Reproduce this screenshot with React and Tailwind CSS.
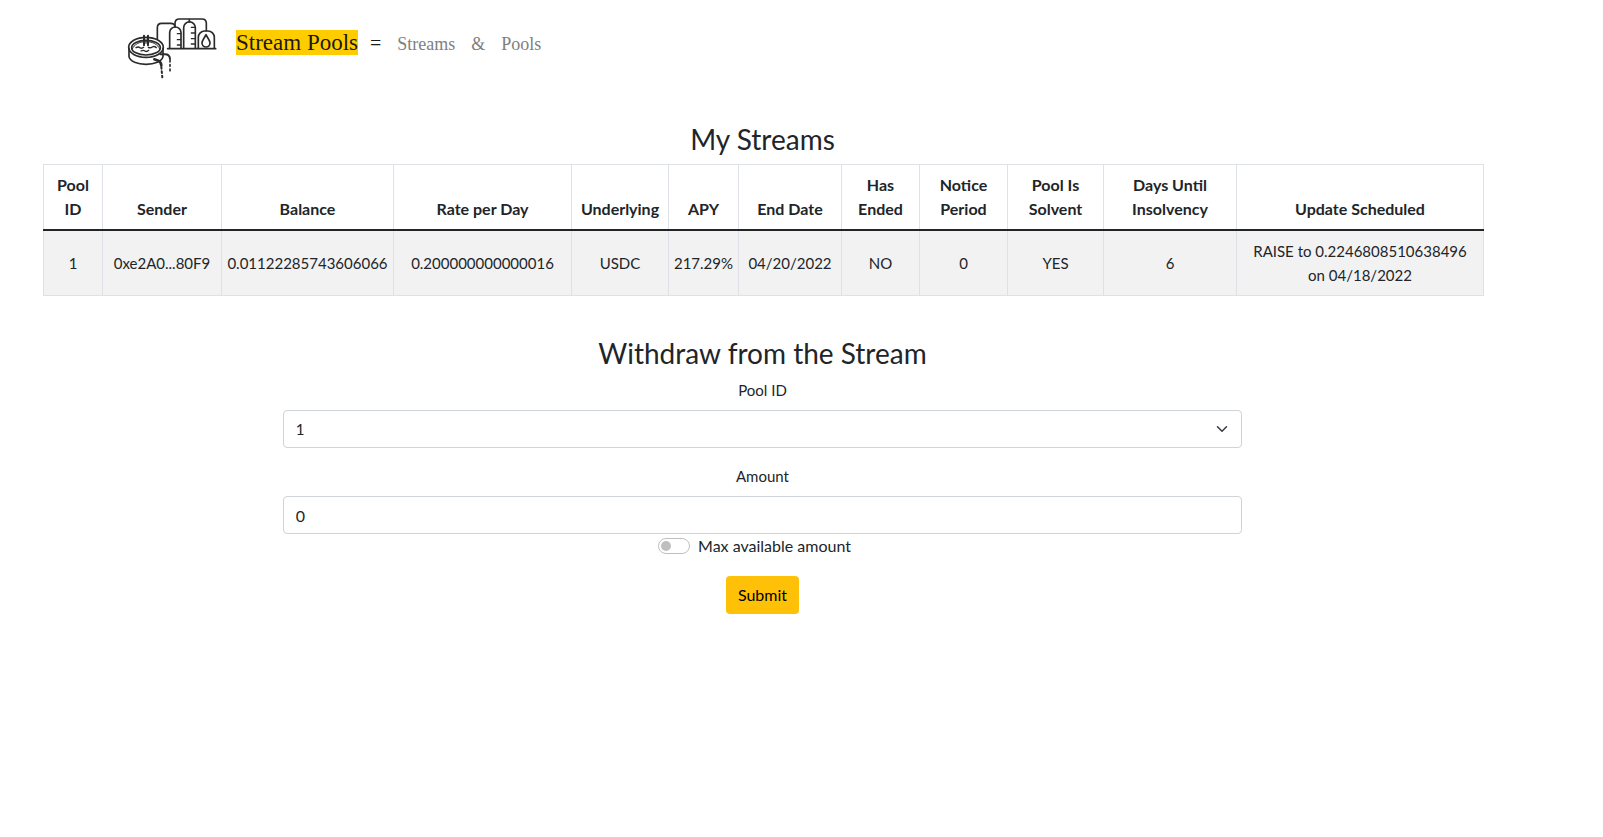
import { useState } from 'react'

const columns = [
  { label: ['Pool', 'ID'], width: 'w-[59px]', value: ['1'] },
  { label: ['Sender'], width: 'w-[119px]', value: ['0xe2A0...80F9'] },
  { label: ['Balance'], width: 'w-[172px]', value: ['0.01122285743606066'] },
  { label: ['Rate per Day'], width: 'w-[178px]', value: ['0.200000000000016'] },
  { label: ['Underlying'], width: 'w-[97px]', value: ['USDC'] },
  { label: ['APY'], width: 'w-[70px]', value: ['217.29%'] },
  { label: ['End Date'], width: 'w-[103px]', value: ['04/20/2022'] },
  { label: ['Has', 'Ended'], width: 'w-[78px]', value: ['NO'] },
  { label: ['Notice', 'Period'], width: 'w-[88px]', value: ['0'] },
  { label: ['Pool Is', 'Solvent'], width: 'w-[96px]', value: ['YES'] },
  { label: ['Days Until', 'Insolvency'], width: 'w-[133px]', value: ['6'] },
  {
    label: ['Update Scheduled'],
    width: 'w-[247px]',
    value: ['RAISE to 0.2246808510638496', 'on 04/18/2022'],
  },
]

function Lines({ items }) {
  return items.map((line) => (
    <span key={line} className="block">
      {line}
    </span>
  ))
}

function Logo() {
  return (
    <svg
      viewBox="0 0 345 255"
      className="h-[85px] w-[115px] shrink-0"
      fill="none"
      stroke="#2b2b2b"
      strokeWidth="5"
      strokeLinecap="round"
      strokeLinejoin="round"
      aria-hidden="true"
    >
      {/* tanks */}
      <path d="M158 131H302" />
      <path d="M164 130V83a17 17 0 0 1 34 0V130" />
      <path d="M206 130V68a17.500 17.500 0 0 1 35 0V130" />
      <path d="M250 130V97a19 19 0 0 1 19-19h10a19 19 0 0 1 19 19V130" />
      <path d="M187 86h10M187 104h10M187 120h10M229 67h11M229 84h11M229 101h11M229 117h11" strokeWidth="4" />
      <path d="M273 89c-5 11-12 17-12 25a12 12 0 0 0 24 0c0-8-7-14-12-25Z" />
      {/* pipes */}
      <path d="M127 102V68q0-13 13-13h27q13 0 13 11" />
      <path d="M180 65V55q0-13 13-13h68q13 0 13 13V77M223 42V50" />
      {/* pool */}
      <ellipse cx="93" cy="127" rx="52" ry="30" />
      <ellipse cx="93" cy="128" rx="43" ry="22" />
      <path d="M42 130V155c3 14 25 23 51 23s48-9 51-23V130" />
      <path d="M52 132c5-14 21-22 41-22s36 8 41 22" strokeWidth="3" />
      {/* ladder */}
      <path d="M87 92V121M99 92V121" strokeWidth="6" />
      <path d="M87 98h12M87 106h12M87 114h12" strokeWidth="3" />
      {/* water */}
      <path d="M63 128q7-4 12 0t11-1M100 127q6 3 12-1t12 2M78 138q7-4 12 0t11-2" strokeWidth="4" />
      {/* outlets */}
      <path d="M136 148h14q14 0 15 14" strokeWidth="6" />
      <path d="M165 166V200" strokeWidth="5" strokeDasharray="5 8" />
      <path d="M118 163l12 4q8 4 9 14" strokeWidth="8" />
      <path d="M139 186l3 32" strokeWidth="6" strokeDasharray="5 8" />
    </svg>
  )
}

export default function App() {
  const [poolId, setPoolId] = useState('1')
  const [amount, setAmount] = useState('0')
  const [useMax, setUseMax] = useState(false)

  return (
    <div className="bg-white font-['Lato',sans-serif] text-base text-[#212529]">
      <header className="flex items-center gap-1.5 pt-[5px] pl-[115px]">
        <Logo />
        <nav className="flex items-baseline pb-2.5 font-['Liberation_Serif',serif] text-lg leading-6 text-[#7f7f7f]">
          <a href="#home" className="bg-[#ffcc00] text-[23px] leading-[25px] text-[#1a1a1a]">
            Stream Pools
          </a>
          <span className="ml-3 text-xl text-[#1a1a1a]">=</span>
          <a href="#streams" className="ml-4">
            Streams
          </a>
          <span className="ml-4">&amp;</span>
          <a href="#pools" className="ml-4">
            Pools
          </a>
        </nav>
      </header>

      <main className="pt-8 pr-[121px] pl-[43px] text-center">
        <h1 className="mb-2 text-[28px] leading-[34px]">My Streams</h1>
        <table className="w-full table-fixed border-collapse text-[15px] leading-6">
          <thead>
            <tr className="border-b-2 border-[#212529] text-base leading-6">
              {columns.map((column) => (
                <th
                  key={column.label.join(' ')}
                  scope="col"
                  className={`${column.width} border-x border-t border-x-[#dee2e6] border-t-[#dee2e6] px-1 py-2 align-bottom font-bold whitespace-nowrap`}
                >
                  <Lines items={column.label} />
                </th>
              ))}
            </tr>
          </thead>
          <tbody>
            <tr className="bg-[#f2f2f2]">
              {columns.map((column) => (
                <td
                  key={column.label.join(' ')}
                  className="border-x border-b border-[#dee2e6] px-1 py-2 align-middle whitespace-nowrap"
                >
                  <Lines items={column.value} />
                </td>
              ))}
            </tr>
          </tbody>
        </table>

        <form className="mx-auto mt-10 w-2/3" onSubmit={(event) => event.preventDefault()}>
          <h2 className="mb-2 text-[28px] leading-[34px]">Withdraw from the Stream</h2>
          <label htmlFor="pool-id" className="mb-2 block text-[15px] leading-6">
            Pool ID
          </label>
          <div className="relative mb-4">
            <select
              id="pool-id"
              value={poolId}
              onChange={(event) => setPoolId(event.target.value)}
              className="block h-[38px] w-full appearance-none rounded border border-[#ced4da] bg-white px-3 text-[15px]"
            >
              <option value="1">1</option>
            </select>
            <svg
              viewBox="0 0 16 16"
              className="pointer-events-none absolute top-[13px] right-3.5 size-3"
              fill="none"
              stroke="#343a40"
              strokeWidth="2"
              strokeLinecap="round"
              strokeLinejoin="round"
              aria-hidden="true"
            >
              <path d="M2 5l6 6 6-6" />
            </svg>
          </div>
          <label htmlFor="amount" className="mb-2 block text-[15px] leading-6">
            Amount
          </label>
          <input
            id="amount"
            type="text"
            value={amount}
            onChange={(event) => setAmount(event.target.value)}
            className="block h-[38px] w-full rounded border border-[#ced4da] bg-white px-3 text-base"
          />
          <div className="mb-[18px] flex items-center justify-center gap-2 pr-4 text-base leading-6">
            <input
              id="max-amount"
              type="checkbox"
              role="switch"
              checked={useMax}
              onChange={(event) => setUseMax(event.target.checked)}
              className="flex h-4 w-8 appearance-none items-center rounded-full border border-[#bfbfbf] bg-white px-0.5 before:size-2.5 before:rounded-full before:bg-[#bfbfbf] checked:justify-end checked:bg-[#ffc107]"
            />
            <label htmlFor="max-amount">Max available amount</label>
          </div>
          <button
            type="submit"
            className="h-[38px] rounded bg-[#ffc107] px-3 text-base leading-6 text-black"
          >
            Submit
          </button>
        </form>
      </main>
    </div>
  )
}
